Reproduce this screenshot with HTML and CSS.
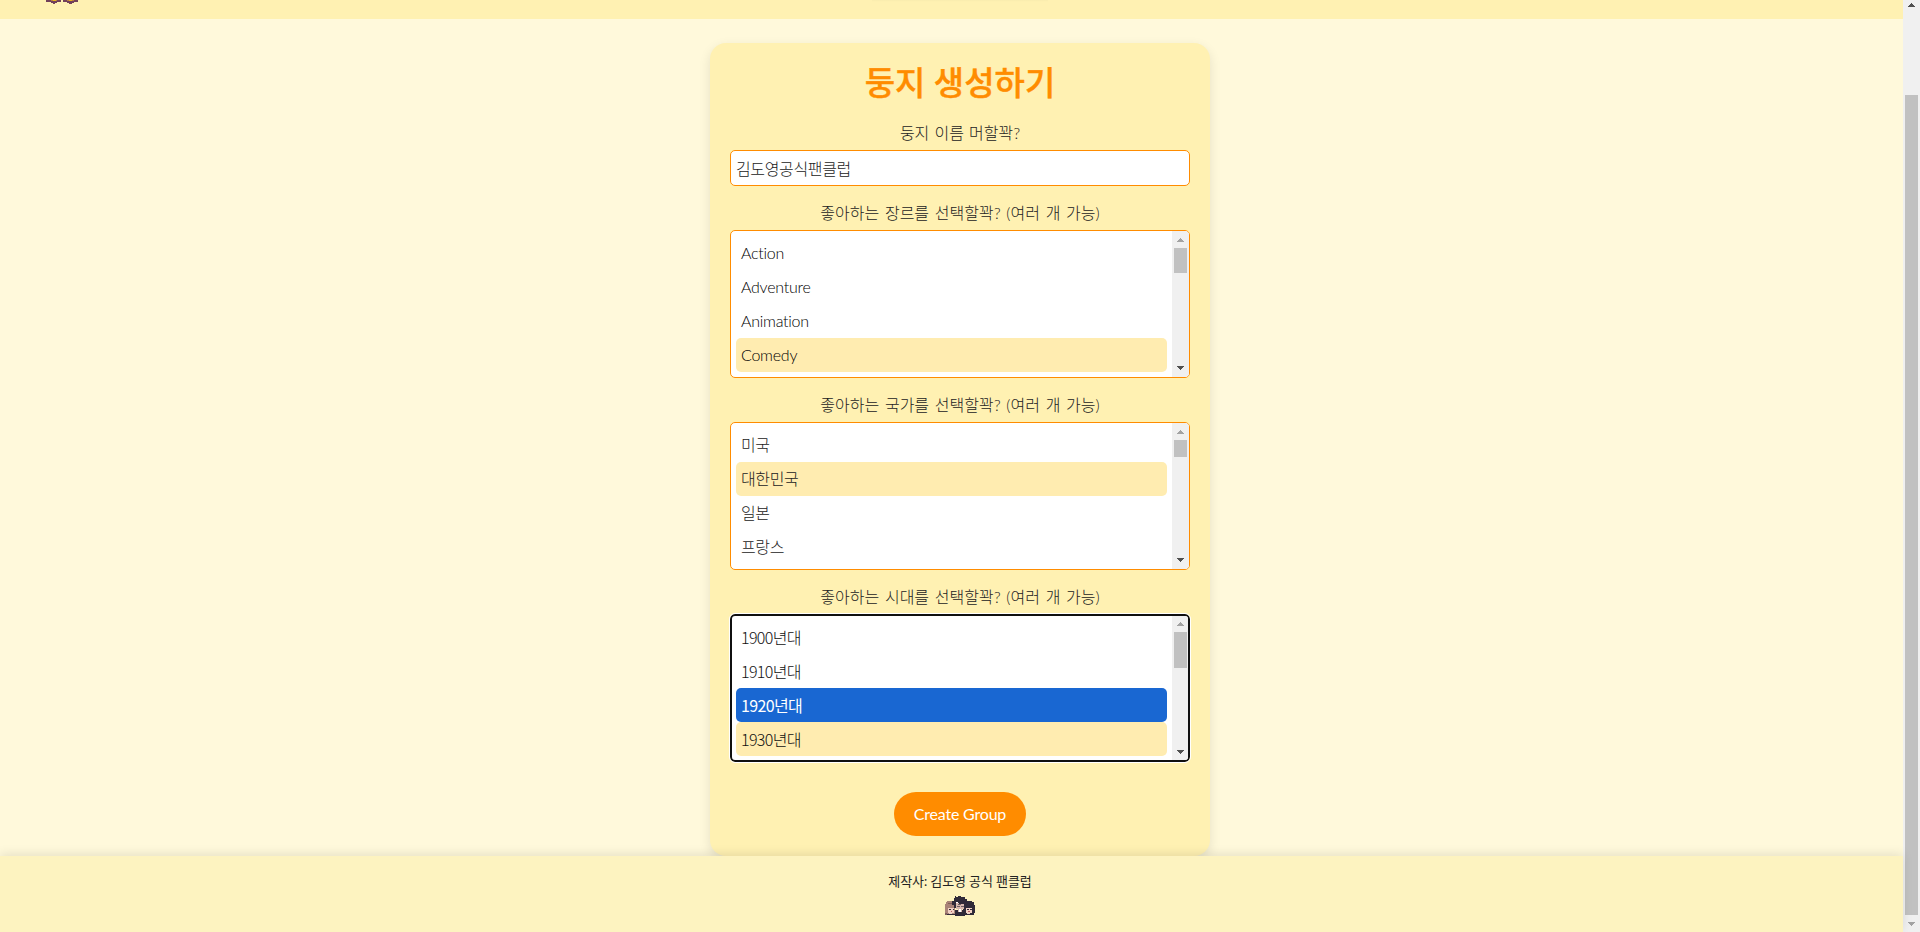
FILE: index.html
```html
<!DOCTYPE html>
<html lang="ko">
<head>
<meta charset="utf-8">
<title>둥지 생성하기</title>
<link rel="stylesheet" href="styles.css">
</head>
<body>
<svg class="defs" width="0" height="0"><defs>
<symbol id="up" viewBox="0 0 7 4"><path d="M3 0h1v1h1v1h1v1h1v1H0V3h1V2h1V1h1z"/></symbol>
<symbol id="down" viewBox="0 0 7 4"><path d="M0 0h7v1H6v1H5v1H4v1H3V3H2V2H1V1H0z"/></symbol>
</defs></svg>
<div class="page">
  <header class="header">
    <svg class="logo" width="34" height="4" viewBox="0 0 34 4" shape-rendering="crispEdges">
      <path fill="#72405a" d="M0 0h15v2h-4v1H9v1H7V3H5V2H0zM17 0h15v2h-4v1h-2v1h-3V3h-2V2h-4z"/>
      <path fill="#e8b51c" d="M7 0h3v1H7zM23 0h3v1h-3z"/><path fill="#b87a48" d="M5 0h2v1H5zM10 0h1v1h-1zM21 0h2v1h-2zM26 0h2v1h-2z"/>
    </svg>
    <div class="nav-shade"></div>
  </header>
  <main class="main">
    <form class="card">
      <h1 class="title">둥지 생성하기</h1>
      <label class="label name-label">둥지 이름 머할꽉?</label>
      <div class="input">김도영공식팬클럽</div>
      <label class="label">좋아하는 장르를 선택할꽉? (여러 개 가능)</label>
      <div class="select">
        <div class="options latin"><div class="option">Action</div><div class="option">Adventure</div><div class="option">Animation</div><div class="option selected">Comedy</div></div>
        <div class="bar"><svg class="arrow dim"><use href="#up"/></svg><div class="thumb t1"></div><svg class="arrow"><use href="#down"/></svg></div>
      </div>
      <label class="label">좋아하는 국가를 선택할꽉? (여러 개 가능)</label>
      <div class="select">
        <div class="options"><div class="option">미국</div><div class="option selected">대한민국</div><div class="option">일본</div><div class="option">프랑스</div></div>
        <div class="bar"><svg class="arrow dim"><use href="#up"/></svg><div class="thumb t2"></div><svg class="arrow"><use href="#down"/></svg></div>
      </div>
      <label class="label">좋아하는 시대를 선택할꽉? (여러 개 가능)</label>
      <div class="select focused">
        <div class="options eras"><div class="option">1900년대</div><div class="option">1910년대</div><div class="option active">1920년대</div><div class="option selected">1930년대</div></div>
        <div class="bar"><svg class="arrow dim"><use href="#up"/></svg><div class="thumb t3"></div><svg class="arrow"><use href="#down"/></svg></div>
      </div>
      <button class="button" type="button">Create Group</button>
    </form>
  </main>
  <footer class="footer">
    <p class="credit">제작사: 김도영 공식 팬클럽</p>
    <svg class="avatars" width="30" height="20" viewBox="0 0 30 20" shape-rendering="crispEdges">
      <path fill="#a98378" d="M2 5h7v3h1v11H1v-2H0V8h1V6h1z"/><path fill="#805e5c" d="M3 7h5v1H3zM0 17h2v2H0z"/>
      <path fill="#302a38" d="M22 5h5v1h2v3h1v8h-1v2H18V7h4z"/>
      <path fill="#f1d1c4" d="M3 12h6v5H3zM21 12h6v5h-6z"/>
      <path fill="#302a38" d="M10 0h1v1h2V0h3v1h4v2h2v6h-1v3h-2V9h-8v3H9V9H7V5h2V2h1zM10 16h10v4H10z"/>
      <path fill="#d8b8ad" d="M11 7h3v1h5v5h-2v3h-4v-3h-2z"/>
      <path fill="#6f6065" d="M12 10h3v1h-3zM16 10h3v1h-3zM13 8h3v1h-3z"/>
      <path fill="#302a38" d="M4 13h2v1H4zM8 13h1v1H8zM22 13h2v1h-2zM25 13h2v1h-2zM10 14h3v3h-3zM17 14h3v3h-3z"/>
      <path fill="#fff" d="M11 6h2v1h-2zM14 13h2v3h-2z"/><path fill="#b95f62" d="M6 15h1v1H6zM23 15h2v1h-2z"/>
      <path fill="#302a38" d="M2 18h8v1H2z"/><path fill="#ead2c9" d="M4 17h3v1H4zM22 17h3v1h-3z"/>
    </svg>
  </footer>
</div>
<div class="page-bar"><svg class="arrow"><use href="#up"/></svg><div class="page-thumb"></div><svg class="arrow dim"><use href="#down"/></svg></div>
</body>
</html>
```
FILE: styles.css
```css
* { box-sizing: border-box; }
body {
  margin: 0;
  display: flex;
  height: 932px;
  overflow: hidden;
  background: #fff9db;
  color: #222;
  font: 300 16px/24px Lato, "Noto Sans CJK KR", sans-serif;
}
.defs { position: absolute; }
.page { width: 1903px; height: 932px; display: flex; flex-direction: column; }
.header { height: 19px; flex: none; background: #fff1b2; display: flex; align-items: flex-start; padding-left: 46px; }
.logo { display: block; flex: none; }
.nav-shade { width: 176px; height: 2px; margin-left: 792px; background: linear-gradient(rgba(0,0,0,.025), transparent); }
.main { height: 837px; flex: none; padding: 24px 0 0 710px; }
.card {
  width: 500px;
  height: 813px;
  padding: 0 20px;
  border-radius: 16px;
  background: #fff1b2;
  box-shadow: 0 4px 12px rgba(0,0,0,.1);
  display: flex;
  flex-direction: column;
}
.title { margin: 14px 0 0; height: 51px; line-height: 50px; font-size: 33px; font-weight: 500; text-align: center; color: #ff8c00; -webkit-text-stroke: .4px #ff8c00; }
.label { height: 44px; padding-top: 15px; text-align: center; white-space: nowrap; letter-spacing: 0; word-spacing: 1.4px; }
.name-label { height: 42px; padding-top: 13px; letter-spacing: 0; word-spacing: .8px; }
.input { height: 36px; border: 1px solid #ff8c00; border-radius: 5px; background: #fff; padding: 6px 5px 4px; letter-spacing: -.35px; }
.select { height: 148px; border: 1px solid #ff8c00; border-radius: 5px; background: #fff; display: flex; overflow: hidden; flex: none; }
.focused { border: 2px solid #101010; outline: 1px solid #fff; }
.options { flex: 1; padding: 5px; letter-spacing: -.35px; }
.focused .options { padding: 4px 5px 4px 4px; }
.option { height: 34px; padding: 5px; border-radius: 5px; }
.latin { letter-spacing: -.25px; color: #000; }
.eras { font-family: "Noto Sans CJK KR", sans-serif; letter-spacing: -.65px; color: #111; }
.selected { background: #ffecb0; }
.active { background: #1967d2; color: #fff; font-weight: 400; }
.bar { width: 17px; background: #f0f0f0; display: flex; flex-direction: column; align-items: center; padding: 7px 0; }
.focused .bar { padding: 6px 0; width: 16px; }
.arrow { width: 7px; height: 4px; fill: #505050; flex: none; display: block; }
.dim { fill: #a3a3a3; }
.thumb { width: 13px; background: #c1c1c1; margin: 6px 0 auto; }
.t1 { height: 25px; }
.t2 { height: 17px; }
.t3 { height: 36px; }
.button { align-self: center; width: 132px; height: 44px; margin-top: 30px; border: 0; border-radius: 22px; background: #ff8c00; color: #fff; font: 400 16px/24px Lato, sans-serif; letter-spacing: -.2px; }
.footer {
  height: 76px;
  position: relative;
  padding: 15px 0 0 17px;
  background: #fdf3c0;
  box-shadow: 0 -2px 10px rgba(0,0,0,.1);
  display: flex;
  flex-direction: column;
  align-items: center;
}
.credit { margin: 0; height: 25px; font-size: 13px; line-height: 21px; font-weight: 400; letter-spacing: -.1px; white-space: nowrap; }
.avatars { display: block; }
.page-bar { width: 17px; background: #f0f0f0; display: flex; flex-direction: column; align-items: center; padding: 3px 0 6px; }
.page-thumb { width: 13px; height: 820px; margin: 88px 0 auto; background: #c1c1c1; }
```
